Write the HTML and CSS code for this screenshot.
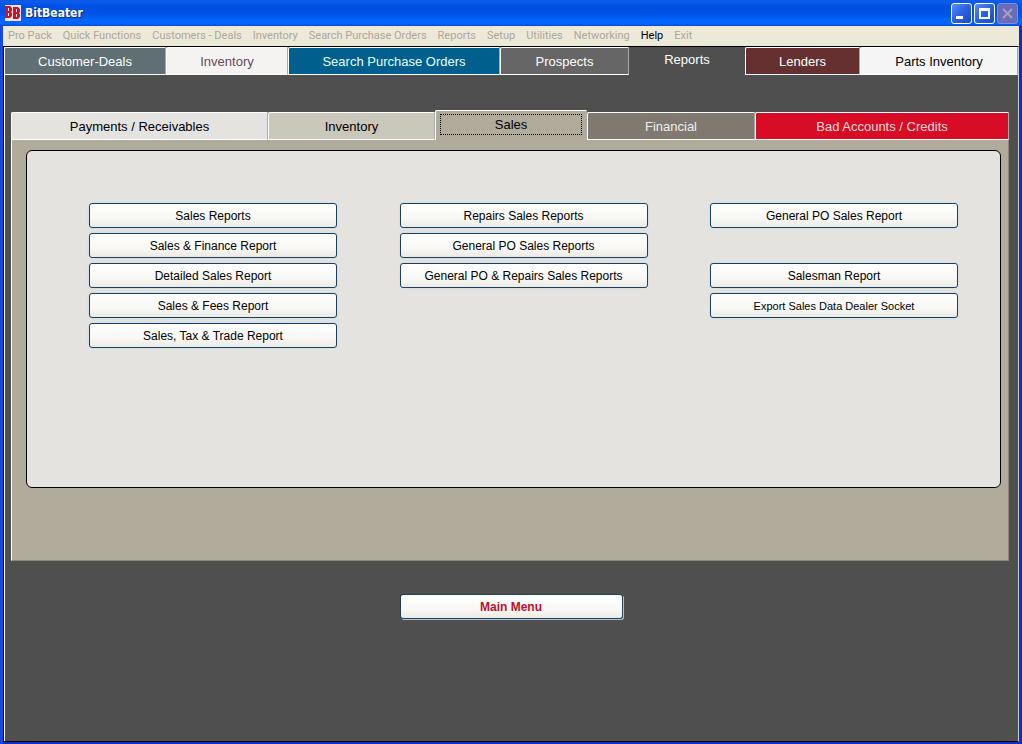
FILE: index.html
```html
<!DOCTYPE html>
<html lang="en">
<head>
  <meta charset="UTF-8">
  <meta name="viewport" content="width=device-width, initial-scale=1.0">
  <title>BitBeater</title>
  <link rel="stylesheet" href="styles.css">
</head>
<body>
  <div class="window">
    <header class="titlebar">
      <svg class="logo" width="16" height="16" viewBox="0 0 16 16" aria-hidden="true">
        <rect width="16" height="16" fill="#f4e4ea"/>
        <path d="M0 1h5l2 2v3l-1 1 1 1v3l-2 2H0zM8 2h5l2 2v3l-1 1 1 1v3l-2 2H8z" fill="#d01226"/>
        <path d="M3 3h1v3H3zM3 8h1v3H3zM11 4h1v3h-1zM11 9h1v3h-1z" fill="#fff"/>
      </svg>
      <h1>BitBeater</h1>
      <div class="window-buttons">
        <button type="button" aria-label="Minimize">
          <svg width="19" height="19" viewBox="0 0 19 19"><path d="M4 12h7v3H4z" fill="#fff"/></svg>
        </button>
        <button type="button" aria-label="Maximize">
          <svg width="19" height="19" viewBox="0 0 19 19"><path d="M4 4h11v11H4zM6 7v6h7V7z" fill="#fff" fill-rule="evenodd"/></svg>
        </button>
        <button type="button" class="close" aria-label="Close" disabled>
          <svg width="19" height="19" viewBox="0 0 19 19"><path d="M5 5l9 9M14 5l-9 9" stroke="#a3a0c4" stroke-width="2" fill="none"/></svg>
        </button>
      </div>
    </header>

    <nav class="menubar">
      <button type="button" disabled>Pro Pack</button>
      <button type="button" disabled>Quick Functions</button>
      <button type="button" disabled>Customers - Deals</button>
      <button type="button" disabled>Inventory</button>
      <button type="button" disabled>Search Purchase Orders</button>
      <button type="button" disabled>Reports</button>
      <button type="button" disabled>Setup</button>
      <button type="button" disabled>Utilities</button>
      <button type="button" disabled>Networking</button>
      <button type="button">Help</button>
      <button type="button" disabled>Exit</button>
    </nav>

    <main class="content">
      <div class="tabs main-tabs" role="tablist">
        <button type="button" role="tab" class="customers">Customer-Deals</button>
        <button type="button" role="tab" class="inventory">Inventory</button>
        <button type="button" role="tab" class="orders">Search Purchase Orders</button>
        <button type="button" role="tab" class="prospects">Prospects</button>
        <button type="button" role="tab" class="reports active" aria-selected="true">Reports</button>
        <button type="button" role="tab" class="lenders">Lenders</button>
        <button type="button" role="tab" class="parts">Parts Inventory</button>
      </div>

      <section class="reports-page">
        <div class="tabs sub-tabs" role="tablist">
          <button type="button" role="tab" class="payments">Payments / Receivables</button>
          <button type="button" role="tab" class="stock">Inventory</button>
          <button type="button" role="tab" class="sales active" aria-selected="true"><span>Sales</span></button>
          <button type="button" role="tab" class="financial">Financial</button>
          <button type="button" role="tab" class="bad">Bad Accounts / Credits</button>
        </div>

        <div class="sheet">
          <div class="panel">
            <div class="column">
              <button type="button">Sales Reports</button>
              <button type="button">Sales &amp; Finance Report</button>
              <button type="button">Detailed Sales Report</button>
              <button type="button">Sales &amp; Fees Report</button>
              <button type="button">Sales, Tax &amp; Trade Report</button>
            </div>
            <div class="column">
              <button type="button">Repairs Sales Reports</button>
              <button type="button">General PO Sales Reports</button>
              <button type="button">General PO &amp; Repairs Sales Reports</button>
            </div>
            <div class="column">
              <button type="button">General PO Sales Report</button>
              <button type="button" class="after-gap">Salesman Report</button>
              <button type="button" class="small">Export Sales Data Dealer Socket</button>
            </div>
          </div>
        </div>
      </section>

      <button type="button" class="main-menu">Main Menu</button>
    </main>
  </div>
</body>
</html>
```
FILE: styles.css
```css
* {
  box-sizing: border-box;
}
body {
  margin: 0;
  font-family: "Liberation Sans", Arial, sans-serif;
  font-size: 12px;
  color: #000;
}
button {
  margin: 0;
  padding: 0;
  border: 0;
  background: none;
  font: inherit;
  color: inherit;
}
.window {
  display: flex;
  flex-direction: column;
  min-height: 100vh;
  padding: 0 3px 2px;
  background: linear-gradient(to right, #0a3fd8, #1d5be8 2px, #0831c4 3px, #0831c4);
}

/* title bar */
.titlebar {
  display: flex;
  align-items: center;
  height: 26px;
  margin: 0 -3px;
  padding: 0 4px 0 5px;
  background: linear-gradient(#1458dc, #0a5cf0 2px, #0050e0 6px, #0052e4 14px, #0264fc 20px, #0264fc 24px, #0046d4);
}
.titlebar h1 {
  flex: 1;
  margin: 0 0 0 4px;
  font-family: "DejaVu Sans Condensed", "DejaVu Sans", sans-serif;
  font-size: 12px;
  font-weight: bold;
  color: #fff;
  text-shadow: 1px 1px #0a2a80;
}
.window-buttons {
  display: flex;
  gap: 2px;
}
.window-buttons button {
  width: 21px;
  height: 21px;
  border: 1px solid #fff;
  border-radius: 3px;
  background: linear-gradient(135deg, #5c8cf4, #2a60e0 50%, #1c4cc8);
}
.window-buttons svg {
  display: block;
}
.window-buttons .close {
  border-color: #7c8ce0;
  background: #6a6cb8;
}

/* menu */
.menubar {
  display: flex;
  flex-wrap: wrap;
  gap: 0 11px;
  min-height: 20px;
  padding: 0 5px;
  background: #ece9d8;
  font-family: Roboto, Tahoma, sans-serif;
  font-size: 11px;
  line-height: 18px;
}
.menubar button:disabled {
  color: #aca899;
}

.content {
  flex: 1;
  display: flex;
  flex-direction: column;
  border: 1px solid #000;
  border-right-color: #ccc;
  box-shadow: inset 1px 0 #fff;
  background: #4f4f4f;
}

/* tabs */
.tabs {
  display: grid;
  font-size: 13px;
}
.tabs button {
  height: 28px;
  border: 1px solid #fff;
  border-right-color: #aaa;
  border-top-left-radius: 2px;
}
.main-tabs {
  grid-template-columns: 162fr 122fr 212fr 129fr 116fr 115fr 158fr;
}
.main-tabs .active {
  border-color: transparent;
  padding-bottom: 4px;
  color: #fff;
}
.customers {
  background: #5f6f73;
  color: #fff;
}
.inventory {
  background: #f5f3f1;
  color: #644a5c;
}
.orders {
  background: #005f8c;
  color: #e4ffff;
}
.prospects {
  background: #666;
  color: #fff;
}
.lenders {
  background: #663030;
  color: #fff;
}
.parts {
  background: #f5f5f5;
}

.reports-page {
  margin: 35px 9px 0 7px;
}
.sub-tabs {
  grid-template-columns: 257fr 167fr 152fr 168fr 254fr;
  align-items: end;
}
.sub-tabs .active {
  height: 30px;
  padding: 3px 4px 5px;
  border-bottom: 0;
  background: #b0ab9b;
}
.sub-tabs .active span {
  display: block;
  border: 1px dotted #000;
  line-height: 19px;
}
.payments {
  background: #e4e3e0;
}
.stock {
  background: #cac7bb;
}
.financial {
  background: #7f796f;
  color: #eee;
}
.bad {
  background: #d80c24;
  color: #f8dcdc;
}

.sheet {
  min-height: 421px;
  padding: 10px 7px 72px 14px;
  border: solid #8c887c;
  border-width: 0 1px 1px;
  border-left-color: #fff;
  background: #b0ab9b;
}
.panel {
  display: flex;
  justify-content: space-between;
  gap: 20px;
  min-height: 338px;
  padding: 52px 42px 52px 62px;
  border: 1px solid #000;
  border-radius: 6px;
  background: #e4e3e0;
}
.column {
  display: flex;
  flex-direction: column;
  gap: 5px;
  width: 248px;
}
.column button,
.main-menu {
  height: 25px;
  border: 1px solid #1c405c;
  border-radius: 3px;
  background: linear-gradient(#fff, #f8f8f5 60%, #eceae4);
}
.column button {
  box-shadow: 0 0 2px 1px #d4dfe6;
}
.column .after-gap {
  margin-top: 30px;
}
.column .small {
  font-size: 11px;
}
.main-menu {
  align-self: center;
  width: 223px;
  margin: 33px 0;
  box-shadow: 1px 1px #b8c4cc;
  font-weight: bold;
  color: #c01028;
}
```
